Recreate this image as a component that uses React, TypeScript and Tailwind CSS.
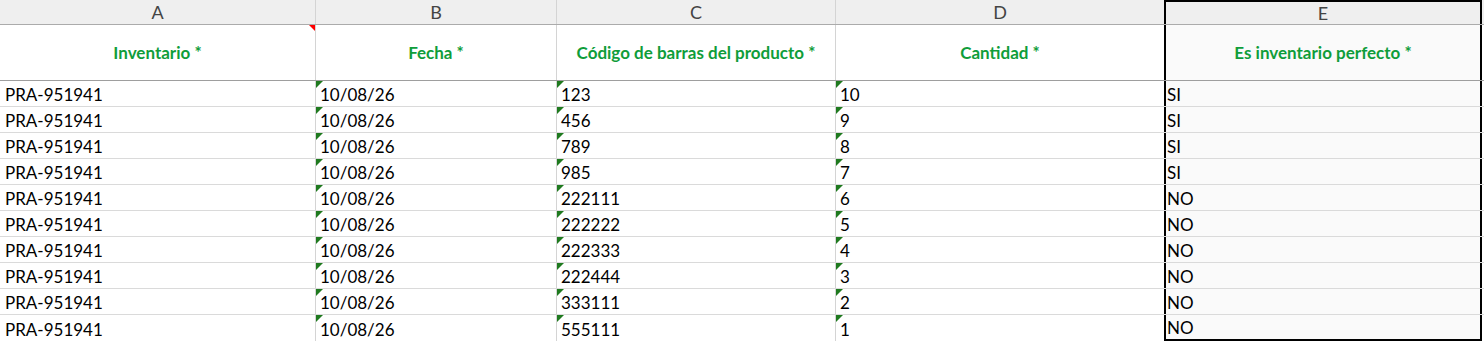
const codes = ["123", "456", "789", "985", "222111", "222222", "222333", "222444", "333111", "555111"];

const rows = codes.map((code, i) => ({
  inv: "PRA-951941",
  date: "10/08/26",
  code,
  qty: String(10 - i),
  perfect: i < 4 ? "SI" : "NO",
}));

function GreenMark() {
  return <span className="absolute left-0 top-0 w-0 h-0 border-t-[7px] border-r-[7px] border-t-[#1f7a1f] border-r-transparent" />;
}

export default function App() {
  return (
    <div className="w-[1484px] h-[342px] bg-white overflow-hidden font-['Lato','Liberation_Sans',sans-serif] text-[17px] text-black">
      {/* column letters */}
      <div className="flex h-[25px] bg-[#efefef] border-b border-[#ababab] text-[#444] text-[18px]">
        <div className="w-[316px] border-r border-[#d4d4d4] flex items-center justify-center">A</div>
        <div className="w-[241px] border-r border-[#d4d4d4] flex items-center justify-center">B</div>
        <div className="w-[279px] border-r border-[#d4d4d4] flex items-center justify-center">C</div>
        <div className="w-[328px] flex items-center justify-center">D</div>
        <div className="w-[318px] border-x-2 border-t-2 border-black flex items-center justify-center">E</div>
      </div>
      {/* field names */}
      <div className="flex h-[56px] border-b border-[#9e9e9e] text-[17px] font-bold text-[#0f9d3a]">
        <div className="relative w-[316px] border-r border-[#d4d4d4] flex items-center justify-center">
          Inventario *
          <span className="absolute right-0 top-0 w-0 h-0 border-t-[6px] border-l-[6px] border-t-[#ff0000] border-l-transparent" />
        </div>
        <div className="w-[241px] border-r border-[#d4d4d4] flex items-center justify-center">Fecha *</div>
        <div className="w-[279px] border-r border-[#d4d4d4] flex items-center justify-center">Código de barras del producto *</div>
        <div className="w-[328px] flex items-center justify-center">Cantidad *</div>
        <div className="w-[318px] border-x-2 border-black bg-[#fafafa] flex items-center justify-center">Es inventario perfecto *</div>
      </div>
      {rows.map((r, i) => (
        <div key={i} className={`flex h-[26px] ${i < rows.length - 1 ? "border-b border-[#dadada]" : ""}`}>
          <div className="w-[316px] border-r border-[#d4d4d4] flex items-end pl-[5px] leading-[22px]">{r.inv}</div>
          <div className="relative w-[241px] border-r border-[#d4d4d4] flex items-end pl-[4px] leading-[22px]">
            <GreenMark />
            {r.date}
          </div>
          <div className="relative w-[279px] border-r border-[#d4d4d4] flex items-end pl-[4px] leading-[22px]">
            <GreenMark />
            {r.code}
          </div>
          <div className="relative w-[328px] flex items-end pl-[4px] leading-[22px]">
            <GreenMark />
            {r.qty}
          </div>
          <div className={`w-[318px] border-x-2 border-black bg-[#fafafa] flex items-end pl-[1px] leading-[22px] ${i === rows.length - 1 ? "border-b-2" : ""}`}>
            {r.perfect}
          </div>
        </div>
      ))}
    </div>
  );
}
